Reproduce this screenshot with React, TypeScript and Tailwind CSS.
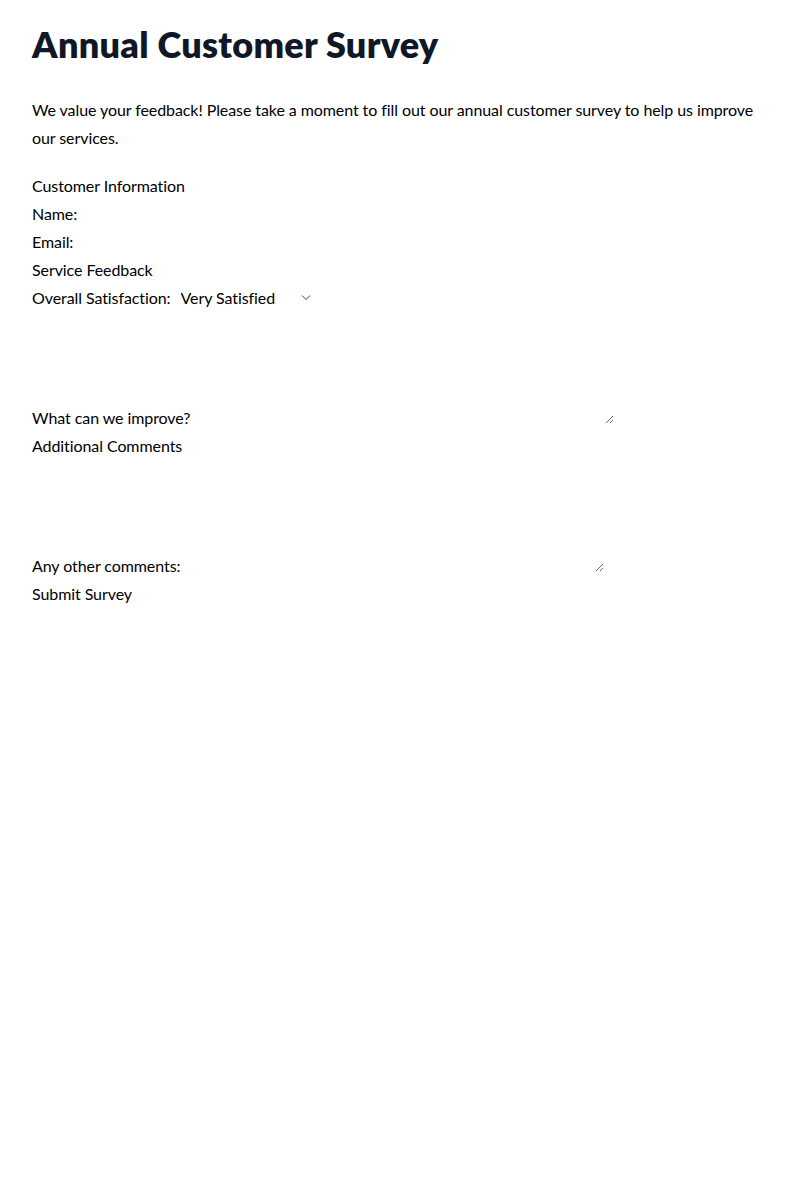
export default function App() {
  return (
    <div className="min-h-screen bg-white px-8 py-6 font-['Lato',sans-serif] text-base leading-7 tracking-[-0.005em] text-black">
      {/* Header */}
      <h1 className="mb-8 text-4xl font-extrabold tracking-[0.008em] text-gray-900">Annual Customer Survey</h1>
      <p className="mb-5">
        We value your feedback! Please take a moment to fill out our annual customer survey to help us improve our
        services.
      </p>

      <form onSubmit={(e) => e.preventDefault()}>
        {/* Customer info */}
        <fieldset>
          <legend>Customer Information</legend>
          <div>
            <label htmlFor="name">Name:</label> <input id="name" type="text" />
          </div>
          <div>
            <label htmlFor="email">Email:</label> <input id="email" type="email" />
          </div>
        </fieldset>

        {/* Service feedback */}
        <fieldset>
          <legend>Service Feedback</legend>
          <div>
            <label htmlFor="satisfaction">Overall Satisfaction:</label>{" "}
            <span className="relative inline-block">
              <select id="satisfaction" defaultValue="very-satisfied" className="appearance-none pr-5 pl-1.5">
                <option value="very-satisfied">Very Satisfied</option>
                <option value="satisfied">Satisfied</option>
                <option value="neutral">Neutral</option>
                <option value="dissatisfied">Dissatisfied</option>
                <option value="very-dissatisfied">Very Dissatisfied</option>
              </select>
              <svg
                className="pointer-events-none absolute top-1/2 right-1.5 -translate-y-1/2 text-gray-700"
                width="10"
                height="6"
                viewBox="0 0 10 6"
                fill="none"
                stroke="currentColor"
                strokeWidth="1"
              >
                <polyline points="1,0.5 5,4.5 9,0.5" />
              </svg>
            </span>
          </div>
          <div>
            <label htmlFor="improve">What can we improve?</label> <textarea id="improve" rows={4} cols={45} />
          </div>
        </fieldset>

        {/* Comments */}
        <fieldset>
          <legend>Additional Comments</legend>
          <div>
            <label htmlFor="comments">Any other comments:</label> <textarea id="comments" rows={4} cols={45} />
          </div>
        </fieldset>

        <button type="submit">Submit Survey</button>
      </form>
    </div>
  );
}
